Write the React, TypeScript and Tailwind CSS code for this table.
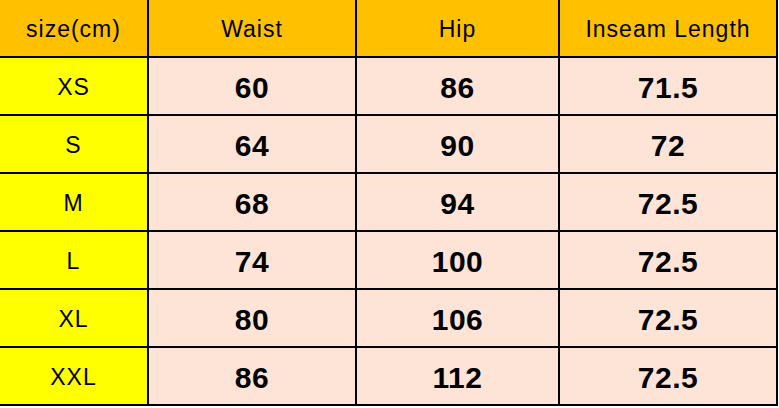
const headers = ['size(cm)', 'Waist', 'Hip', 'Inseam Length'];

const rows = [
  ['XS', '60', '86', '71.5'],
  ['S', '64', '90', '72'],
  ['M', '68', '94', '72.5'],
  ['L', '74', '100', '72.5'],
  ['XL', '80', '106', '72.5'],
  ['XXL', '86', '112', '72.5'],
];

export default function App() {
  return (
    <div className="min-h-screen bg-white" style={{ fontFamily: '"Liberation Sans", Arial, sans-serif' }}>
      <div className="grid w-[778px] grid-cols-[147px_206px_201px_216px] auto-rows-[56px] gap-[2px] bg-black pr-[2px] pb-[2px]">
        {headers.map((h) => (
          <div key={h} className="flex items-center justify-center bg-[#ffc000] pt-[3px] text-[23px] tracking-[1px] text-black">
            {h}
          </div>
        ))}
        {rows.map((r) => (
          <>
            <div key={r[0]} className="flex items-center justify-center bg-[#ffff00] pt-[2px] text-[23px] tracking-[1px] text-black">
              {r[0]}
            </div>
            {r.slice(1).map((v, i) => (
              <div key={r[0] + i} className="flex items-center justify-center bg-[#fde4d7] pt-[2px] text-[30px] font-bold tracking-[0.5px] text-black">
                {v}
              </div>
            ))}
          </>
        ))}
      </div>
    </div>
  );
}
